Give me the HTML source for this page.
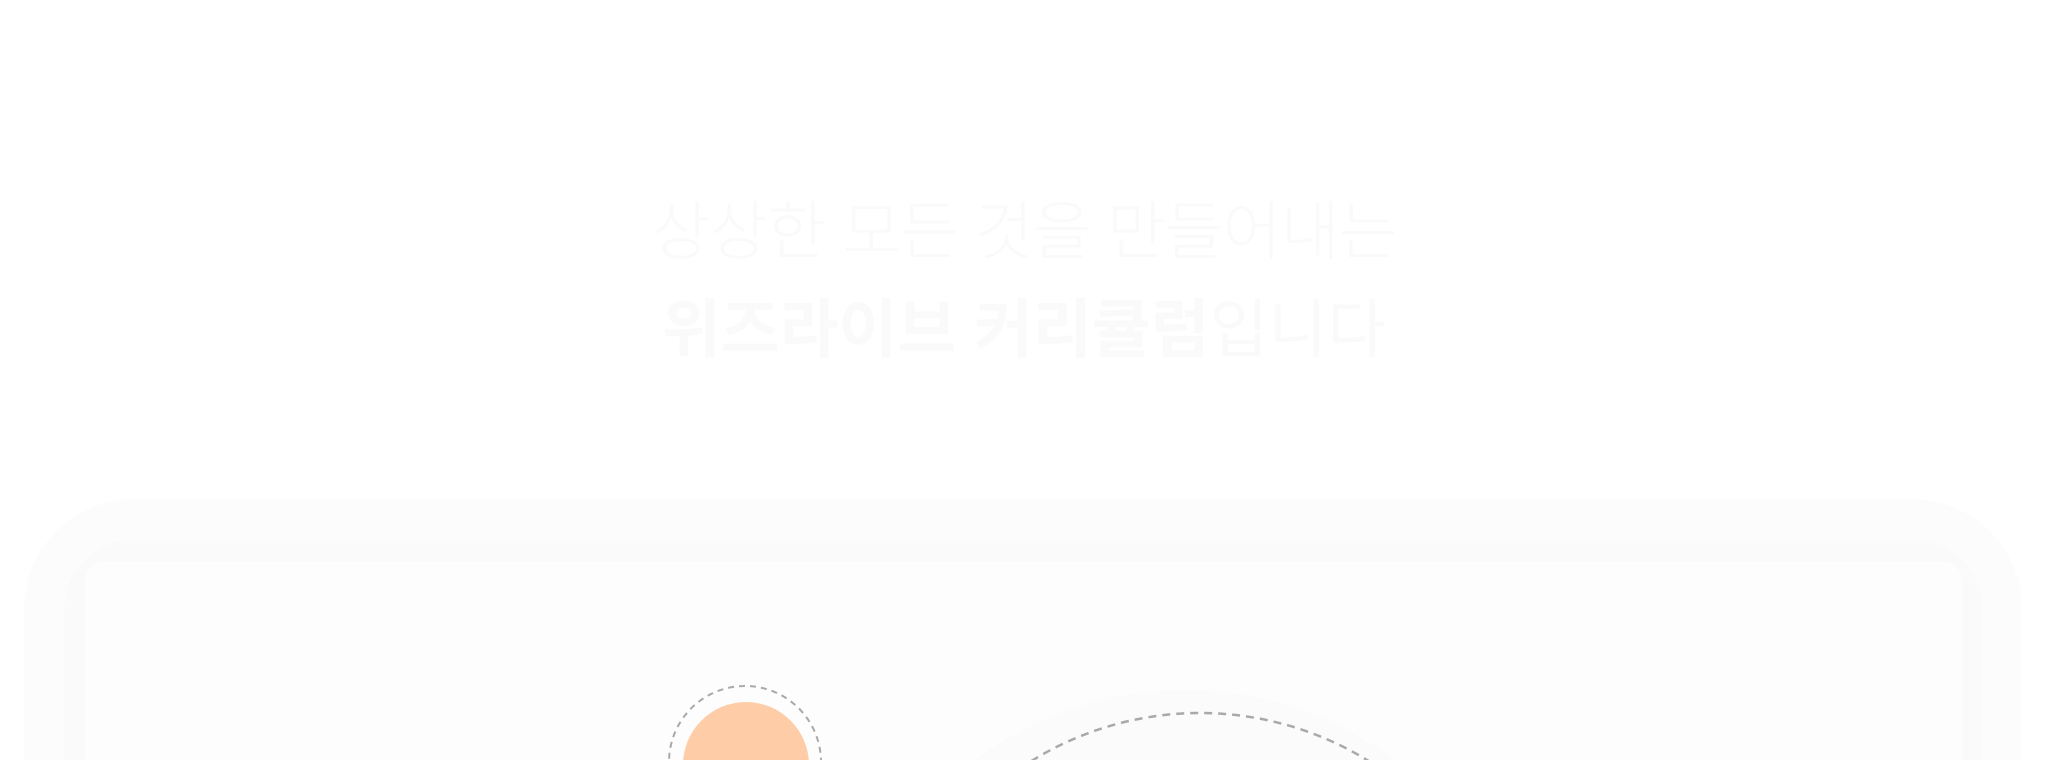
<!DOCTYPE html>
<html><head><meta charset="utf-8"><style>
html,body{margin:0;padding:0;background:#fff;width:2048px;height:760px;overflow:hidden;position:relative}
.t{position:absolute;left:0;width:2048px;text-align:center;font-family:"Liberation Sans","Noto Sans CJK KR",sans-serif;color:#fafafa;font-size:64px;line-height:1;white-space:nowrap}
.l1{top:200px;font-weight:300;letter-spacing:-1px}
.l2{top:298px;}
.l2 b{font-weight:700}
.l2 span{font-weight:400}
.o{position:absolute;left:24px;top:499px;width:1998px;height:261px;background:#fcfcfc;border-radius:110px 110px 0 0}
.m{position:absolute;left:64px;top:540px;width:1919px;height:220px;background:#fafafa;border-radius:70px 70px 0 0}
.i{position:absolute;left:85px;top:561px;width:1877px;height:199px;background:#fdfdfd;border-radius:20px 20px 0 0}
svg{position:absolute;left:0;top:0}
</style></head><body>
<div class="t l1">상상한 모든 것을 만들어내는</div>
<div class="t l2"><b>위즈라이브 커리큘럼</b><span>입니다</span></div>
<div class="o"></div><div class="m"></div><div class="i"></div>
<svg width="2048" height="760" viewBox="0 0 2048 760">
<circle cx="1185" cy="1040" r="350" fill="#fbfbfb"/>
<circle cx="1200" cy="1033" r="320" fill="none" stroke="#a9a9a9" stroke-width="2.5" stroke-dasharray="8 6"/>
<circle cx="745" cy="762" r="76" fill="none" stroke="#a9a9a9" stroke-width="2" stroke-dasharray="6 5"/>
<circle cx="746" cy="765" r="63" fill="#fecda8"/>
</svg>
</body></html>
